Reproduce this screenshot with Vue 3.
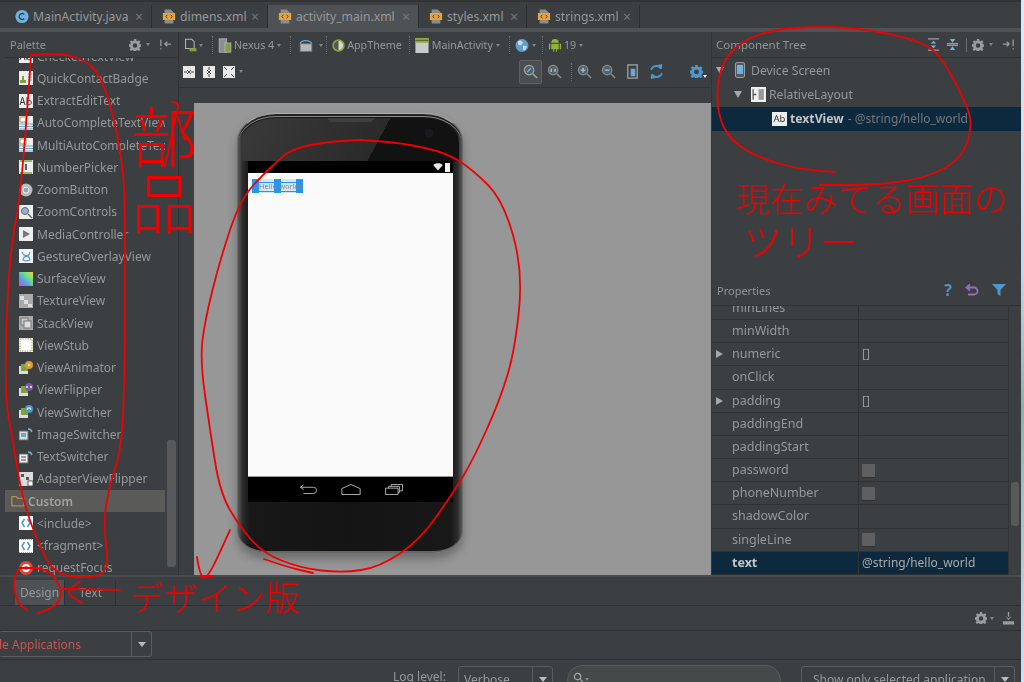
<template>
  <div class="screen">
    <div class="ide">
      <div class="tabs">
        <div v-for="tab in tabs" :key="tab.name" class="tab" :class="{ active: tab.active }" :style="{ width: tab.width + 'px' }">
          <svg v-if="tab.java" class="tab-icon" viewBox="0 0 16 16">
            <circle cx="8" cy="8" r="7.500" fill="#6db3e0" />
            <path d="M10.600 5.600a3.400 3.400 0 1 0 0 4.800" fill="none" stroke="#2b4a5e" stroke-width="1.600" />
          </svg>
          <svg v-else class="tab-icon" viewBox="0 0 16 16">
            <path d="M3 0h7l3 3v13H3z" fill="#8a8c8e" />
            <rect x="1" y="4" width="14" height="8" fill="#e9a23b" />
            <path d="M6 6 4.500 8 6 10M10 6l1.500 2L10 10" fill="none" stroke="#4a3a1c" stroke-width="1.100" />
          </svg>
          <span class="tab-name">{{ tab.name }}</span>
          <span class="tab-close">×</span>
        </div>
      </div>
      <div class="tab-strip"></div>

      <div class="main">
        <div class="palette">
          <div class="panel-head">
            <span>Palette</span>
            <span class="head-icons">
              <svg class="gear" viewBox="0 0 16 16"><path :d="gearPath" fill="#9a9c9e" /></svg>
              <i class="mini-arrow"></i>
              <svg class="pin" viewBox="0 0 14 14"><path d="M2 2v7M2 11v1.500M6 6.500h7M6 6.500l3-2.500M6 6.500 9 9" fill="none" stroke="#9a9c9e" stroke-width="1.400" /></svg>
            </span>
          </div>
          <div class="palette-body">
            <div class="palette-list">
              <div v-for="item in palette" :key="item.name" class="pal-row" :class="{ folder: item.folder }">
                <svg v-if="item.folder" class="pal-icon folder-icon" viewBox="0 0 16 14">
                  <path d="M1 12.500V2h5l1.500 2H15v8.500z" fill="none" stroke="#b08d57" stroke-width="1.500" />
                </svg>
                <svg v-else class="pal-icon" viewBox="0 0 14 14" v-html="icons[item.icon]"></svg>
                <span>{{ item.name }}</span>
              </div>
            </div>
            <div class="pal-scroll"><div class="pal-thumb"></div></div>
          </div>
        </div>

        <div class="center">
          <div class="bar-one">
            <svg class="tb-icon device-icon" viewBox="0 0 18 18">
              <path d="M2 1h8l3 3v9H2z" fill="none" stroke="#b5b7b9" stroke-width="1.300" />
              <path d="M7 12.500h9v4H7z" fill="#7fa13c" />
            </svg>
            <i class="mini-arrow"></i>
            <span class="dots"></span>
            <svg class="tb-icon" viewBox="0 0 16 18">
              <rect x="1" y="1" width="9" height="16" fill="#8d8f8f" stroke="#b5b7b9" />
              <rect x="8" y="6" width="7" height="11" fill="#7fa13c" stroke="#b5b7b9" />
            </svg>
            <span class="tb-text">Nexus 4</span>
            <i class="mini-arrow"></i>
            <span class="dots"></span>
            <svg class="tb-icon rotate-icon" viewBox="0 0 20 18">
              <path d="M3 7c1-5 12-5 14 0" fill="none" stroke="#6aa7d3" stroke-width="1.500" />
              <rect x="3" y="7" width="14" height="9" fill="#b5b7b9" stroke="#77797b" />
            </svg>
            <i class="mini-arrow"></i>
            <span class="dots tight"></span>
            <svg class="tb-icon theme-icon" viewBox="0 0 14 14">
              <circle cx="7" cy="7" r="5.800" fill="#d8d8d0" stroke="#8ba63e" stroke-width="1.800" />
              <path d="M7 2a5 5 0 0 0 0 10z" fill="#55584f" />
            </svg>
            <span class="tb-text theme">AppTheme</span>
            <span class="dots"></span>
            <svg class="tb-icon" viewBox="0 0 14 16">
              <rect y="0" width="14" height="16" fill="#c9cbcb" />
              <rect y="0" width="14" height="5" fill="#8fa63f" />
              <path d="M0 2.500h14" stroke="#566227" />
            </svg>
            <span class="tb-text activity">MainActivity</span>
            <i class="mini-arrow"></i>
            <span class="dots"></span>
            <svg class="tb-icon" viewBox="0 0 14 14">
              <circle cx="7" cy="7" r="6.500" fill="#5f9fd0" />
              <path d="M3 2.500 6 2l2 2-2 3-3-1zM8 7l4 1-2 4-2-1z" fill="#cfd8de" />
            </svg>
            <i class="mini-arrow"></i>
            <span class="dots near"></span>
            <svg class="tb-icon" viewBox="0 0 14 16">
              <path d="M3 5a4 4 0 0 1 8 0zM3 6h8v6H9v3H8v-3H6v3H5v-3H3zM0.500 6h1.500v6H.5zM12 6h1.500v6H12z" fill="#8fb339" />
            </svg>
            <span class="tb-text api">19</span>
            <i class="mini-arrow"></i>
          </div>
          <div class="bar-two">
            <div class="bar-group">
              <span class="align-btn"><svg viewBox="0 0 12 12"><path d="M1 6h3M8 6h3M4 4l2 2-2 2M8 4 6 6l2 2" fill="none" stroke="#444" /></svg></span>
              <span class="align-btn"><svg viewBox="0 0 12 12"><path d="M6 1v3M6 8v3M4 4l2 2 2-2M4 8l2-2 2 2" fill="none" stroke="#444" /></svg></span>
              <span class="align-btn"><svg viewBox="0 0 12 12"><path d="M1 1l3 3M11 1 8 4M1 11l3-3M11 11 8 8" fill="none" stroke="#444" /></svg></span>
              <i class="mini-arrow"></i>
            </div>
            <div class="bar-group">
              <span class="zoom-btn on">
                <svg viewBox="0 0 16 16"><circle cx="6.500" cy="6.500" r="5" fill="#566068" stroke="#a5a7a9" stroke-width="1.300" /><path d="M4.500 8.500l4-4" stroke="#6db3e0" stroke-width="1.600" /><path d="M10.500 10.500 15 15" stroke="#a5a7a9" stroke-width="1.600" /></svg>
              </span>
              <span class="zoom-btn">
                <svg viewBox="0 0 16 16"><circle cx="6.500" cy="6.500" r="5" fill="#566068" stroke="#8a8c8e" stroke-width="1.300" /><path d="M4.500 5v3.500M8.500 5v3.500" stroke="#c5d8e6" stroke-width="1.200" /><path d="M10.500 10.500 15 15" stroke="#8a8c8e" stroke-width="1.600" /></svg>
              </span>
              <span class="dots wide"></span>
              <span class="zoom-btn">
                <svg viewBox="0 0 16 16"><circle cx="6.500" cy="6.500" r="5" fill="#566068" stroke="#8a8c8e" stroke-width="1.300" /><path d="M4 6.500h5M6.500 4v5" stroke="#8cc3e8" stroke-width="1.500" /><path d="M10.500 10.500 15 15" stroke="#8a8c8e" stroke-width="1.600" /></svg>
              </span>
              <span class="zoom-btn">
                <svg viewBox="0 0 16 16"><circle cx="6.500" cy="6.500" r="5" fill="#566068" stroke="#8a8c8e" stroke-width="1.300" /><path d="M4 6.500h5" stroke="#8cc3e8" stroke-width="1.500" /><path d="M10.500 10.500 15 15" stroke="#8a8c8e" stroke-width="1.600" /></svg>
              </span>
              <span class="zoom-btn">
                <svg viewBox="0 0 16 16"><path d="M3 1h10v14H3z" fill="none" stroke="#a5a7a9" stroke-width="1.300" /><rect x="6" y="5" width="5" height="8" fill="#6aa7d3" /></svg>
              </span>
              <span class="zoom-btn">
                <svg viewBox="0 0 16 16"><path d="M13 5A6 6 0 0 0 3.500 4L2 6M3 11a6 6 0 0 0 9.500 1L14 10" fill="none" stroke="#4e96cc" stroke-width="2" /><path d="M9 1l5-1v5zM7 15l-5 1v-5z" fill="#4e96cc" /></svg>
              </span>
              <span class="gear-blue">
                <svg viewBox="0 0 16 16"><path :d="gearPath" fill="#4e96cc" /></svg>
                <i class="mini-arrow white"></i>
              </span>
            </div>
          </div>
          <div class="canvas">
            <div class="phone">
              <div class="bezel-top">
                <i class="speaker"></i>
                <i class="camera"></i>
              </div>
              <div class="screen-wrap">
                <div class="status-bar">
                  <svg class="wifi" viewBox="0 0 12 10"><path d="M0 2.500C3-.5 9-.5 12 2.500L6 9.500z" fill="#e8e8e8" /></svg>
                  <i class="battery"></i>
                </div>
                <div class="display">
                  <div class="selection">
                    <i></i><i></i><i></i>
                    <span class="hello">Hello world!</span>
                  </div>
                </div>
                <div class="nav-bar">
                  <svg viewBox="0 0 20 12" class="nav-back"><path d="M5 1 1.500 3.500 5 6M1.500 3.500H16a3.500 3.500 0 0 1 0 7H5" fill="none" stroke="#bbb" stroke-width="1" /></svg>
                  <svg viewBox="0 0 21 12" class="nav-home"><path d="M.5 5 10.500.5 20.500 5v6.500H.5z" fill="none" stroke="#bbb" stroke-width="1" /></svg>
                  <svg viewBox="0 0 20 12" class="nav-recent"><path d="M.5 4.500h14v7H.5zM4 4.500V2.500h12v7h-1.500M7 2.500V.5h12.500v7H16" fill="none" stroke="#bbb" stroke-width="1" /></svg>
                </div>
              </div>
            </div>
          </div>
        </div>

        <div class="right">
          <div class="panel-head tree-head">
            <span>Component Tree</span>
            <span class="head-icons">
              <svg class="pin" viewBox="0 0 14 14"><path d="M1 1h12M1 13h12" stroke="#9a9c9e" stroke-width="1.400" /><path d="M7 3l3 3H4zM7 11 4 8h6z" fill="#6db3e0" /></svg>
              <svg class="pin" viewBox="0 0 14 14"><path d="M1 6h12M1 8h12" stroke="#9a9c9e" stroke-width="1.200" /><path d="M7 5 4 1h6zM7 9l3 4H4z" fill="#6db3e0" /></svg>
              <b class="head-sep"></b>
              <svg class="gear" viewBox="0 0 16 16"><path :d="gearPath" fill="#9a9c9e" /></svg>
              <i class="mini-arrow"></i>
              <svg class="pin" viewBox="0 0 14 14"><path d="M12 2v7M12 11v1.500M1 6.500h7M8 6.500 5 4M8 6.500 5 9" fill="none" stroke="#9a9c9e" stroke-width="1.400" /></svg>
            </span>
          </div>
          <div class="tree">
            <div class="tree-row lvl-0">
              <i class="caret-down"></i>
              <svg class="tree-icon" viewBox="0 0 10 16"><rect x=".5" y=".5" width="9" height="15" rx="1.500" fill="#55585a" stroke="#9a9c9e" /><rect x="2" y="3" width="6" height="9" fill="#6db3e0" /></svg>
              <span>Device Screen</span>
            </div>
            <div class="tree-row lvl-1">
              <i class="caret-down"></i>
              <svg class="tree-icon box" viewBox="0 0 14 14"><rect width="14" height="14" fill="#f0f0f0" /><path d="M2 2v10M2 7h3" stroke="#555" stroke-width="1.200" /><rect x="7" y="2" width="5" height="10" fill="#999" /></svg>
              <span>RelativeLayout</span>
            </div>
            <div class="tree-row lvl-2 picked">
              <span class="ab">Ab</span>
              <b>textView</b>
              <span class="ref">- @string/hello_world</span>
            </div>
          </div>

          <div class="panel-head props-head">
            <span>Properties</span>
            <span class="head-icons prop-icons">
              <span class="help">?</span>
              <svg class="undo" viewBox="0 0 14 14"><path d="M5 1.500 1.500 4.500 5 7.500M1.500 4.500H9a3.500 3.500 0 0 1 0 7H3" fill="none" stroke="#9b6bc0" stroke-width="1.800" /></svg>
              <svg class="filter" viewBox="0 0 14 14"><path d="M0 1h14L8.500 7v6l-3-2V7z" fill="#4e96cc" /></svg>
            </span>
          </div>
          <div class="props">
            <div class="prop-table">
              <div v-for="prop in props" :key="prop.name" class="prop-row" :class="{ picked: prop.picked }">
                <div class="prop-name">
                  <i v-if="prop.more" class="caret-right"></i>
                  {{ prop.name }}
                </div>
                <div class="prop-value">
                  <i v-if="prop.check" class="check"></i>
                  <template v-else>{{ prop.value }}</template>
                </div>
              </div>
            </div>
            <div class="prop-scroll"><div class="prop-thumb"></div></div>
          </div>
        </div>
      </div>

      <div class="mode-bar">
        <span class="mode on">Design</span>
        <span class="mode">Text</span>
      </div>
      <div class="tool-row">
        <svg class="gear" viewBox="0 0 16 16"><path :d="gearPath" fill="#9a9c9e" /></svg>
        <i class="mini-arrow"></i>
        <svg class="pin dl" viewBox="0 0 14 14"><path d="M7 0v5M7 7v1" stroke="#9a9c9e" stroke-width="1.400" /><path d="M4.500 5 7 8l2.500-3" fill="none" stroke="#9a9c9e" /><rect x="1" y="10" width="12" height="3.500" fill="#9a9c9e" /></svg>
      </div>
      <div class="app-row">
        <div class="combo app-combo">
          <span class="app-text">le Applications</span>
          <span class="combo-arrow"><i class="caret-white"></i></span>
        </div>
      </div>
      <div class="log-row">
        <span class="log-label">Log level:</span>
        <div class="combo verbose">
          <span class="combo-text">Verbose</span>
          <span class="combo-arrow"><i class="caret-white"></i></span>
        </div>
        <div class="search">
          <svg viewBox="0 0 12 12"><circle cx="5" cy="5" r="3.500" fill="none" stroke="#aaa" stroke-width="1.300" /><path d="M8 8l3 3" stroke="#aaa" stroke-width="1.300" /></svg>
          <i class="mini-arrow"></i>
        </div>
        <div class="combo only">
          <span class="combo-text">Show only selected application</span>
          <span class="combo-arrow"><i class="caret-white"></i></span>
        </div>
      </div>
    </div>
    <div class="desktop"></div>

    <!-- red pen notes scribbled over the screenshot -->
    <svg class="pen" viewBox="0 0 1024 682">
      <path v-for="(d, i) in strokes" :key="i" :d="d" />
    </svg>
    <span class="note note-parts">部<br />品</span>
    <span class="note note-now">現在みてる画面の</span>
    <span class="note note-tree">ツリー</span>
    <span class="note note-design">デザイン版</span>
  </div>
</template>

<script setup>
const gearPath =
  "M6.500 0h3l.4 2.300 1.500.6L13.300 1.500l2 2-1.400 1.900.6 1.500 2.300.4v3l-2.300.4-.6 1.500 1.400 1.900-2 2-1.900-1.400-1.500.6-.4 2.200h-3l-.4-2.200-1.500-.6-1.900 1.400-2-2 1.400-1.900-.6-1.500L-.5 10V7l2.300-.4.6-1.500L1 3.500l2-2 1.900 1.400 1.500-.6zM8 5.500a3 3 0 1 0 0 6 3 3 0 0 0 0-6z";

const tabs = [
  { name: "MainActivity.java", width: 147, java: true },
  { name: "dimens.xml", width: 116 },
  { name: "activity_main.xml", width: 151, active: true },
  { name: "styles.xml", width: 108 },
  { name: "strings.xml", width: 113 },
];

const white = '<rect width="14" height="14" fill="#eee"/>';
const icons = {
  text: white + '<path d="M1 11 3.500 3 6 11M2 8.500h3M8 3v8M8 8a2.200 2.200 0 1 1 0 1" fill="none" stroke="#333"/>',
  badge: white + '<path d="M3 9V5h2v4zM1 12V9h6v3z" fill="#7fa13c"/><path d="M9 3h4M9 6h4M9 9h4" stroke="#888"/>',
  auto: white + '<rect x="1" y="1" width="6" height="5" fill="#fff" stroke="#b08d57"/><path d="M0 8h14M0 10.500h14M0 13h14" stroke="#6aa7d3"/>',
  picker: white + '<path d="M1 1h12M1 13h12" stroke="#7fa13c" stroke-width="1.500"/><path d="M7 4v6" stroke="#333" stroke-width="1.500"/>',
  zoombtn: '<circle cx="7" cy="7" r="6.500" fill="#bbb"/><circle cx="7" cy="7" r="3" fill="#8fa8ba" stroke="#eee"/>',
  zoomctl: white + '<circle cx="6" cy="6" r="3.500" fill="#8fb8d8" stroke="#666"/><path d="M9 9l4 4" stroke="#666" stroke-width="1.500"/>',
  media: white + '<path d="M4 3l7 4-7 4z" fill="#777"/>',
  gesture: '<rect width="14" height="14" fill="#f4f4f4"/><path d="M3 3c2 5 7 5 8 0M4 11c1-5 6-5 7 0-2 1-5 1-7 0z" fill="none" stroke="#5f9fd0" stroke-width="1.300"/>',
  surface: '<defs><linearGradient id="sv" x1="0" y1="1" x2="1" y2="0"><stop offset="0" stop-color="#d64fd0"/><stop offset=".35" stop-color="#5aa0f0"/><stop offset=".65" stop-color="#6fe080"/><stop offset="1" stop-color="#f4d050"/></linearGradient></defs><rect width="14" height="14" fill="url(#sv)"/>',
  texture: '<rect width="14" height="14" fill="#aaa"/><path d="M1 2h4v4H1zM5 6h4v4H5zM9 10h4v3H9z" fill="#ddd"/>',
  stack: '<rect width="14" height="14" fill="#aaa"/><rect x="2" y="2" width="7" height="7" fill="#c8c8c8" stroke="#777"/><rect x="5" y="5" width="7" height="7" fill="#ddd" stroke="#777"/>',
  stub: '<rect width="14" height="14" fill="#fff"/><rect x="1" y="1" width="12" height="12" fill="none" stroke="#8fa63f" stroke-dasharray="1.500 1"/>',
  anim: '<rect x="0" y="5" width="9" height="8" fill="#ddd"/><rect x="2" y="3" width="7" height="7" fill="#7fa13c"/><circle cx="10" cy="4" r="4" fill="#e8982f"/><path d="M9 2.500 11.500 4 9 5.500z" fill="#fff"/>',
  flip: '<rect x="0" y="5" width="9" height="8" fill="#ddd"/><rect x="2" y="3" width="7" height="7" fill="#7fa13c"/><circle cx="10" cy="4" r="4" fill="#7b55a8"/><path d="M8 3v2M12 3v2" stroke="#fff" stroke-width="1.400"/>',
  swtch: '<rect x="0" y="5" width="9" height="8" fill="#ddd"/><rect x="2" y="3" width="7" height="7" fill="#7fa13c"/><circle cx="10" cy="4" r="4" fill="#4e96cc"/><path d="M8.500 5V3h3v2" fill="none" stroke="#fff"/>',
  imgsw: '<rect x="0" y="4" width="9" height="9" fill="#ddd" stroke="#666"/><rect x="2" y="6" width="5" height="4" fill="#6aa7d3"/><path d="M9 2a4 4 0 0 1 4 3" fill="none" stroke="#6db3e0" stroke-width="1.300"/>',
  txtsw: '<rect x="0" y="4" width="9" height="9" fill="#eee" stroke="#666"/><path d="M2 7h5M2 10h5" stroke="#444"/><path d="M9 2a4 4 0 0 1 4 3" fill="none" stroke="#6db3e0" stroke-width="1.300"/>',
  adapter: '<rect width="14" height="14" fill="#ddd"/><path d="M2 2h3v3H2zM7 5h3v3H7z" fill="#555"/><rect x="9" y="9" width="5" height="5" fill="#fff" stroke="#555"/>',
  include: '<rect width="14" height="14" fill="#fff"/><path d="M5.500 3 3 7l2.500 4M8.500 3 11 7l-2.500 4" fill="none" stroke="#4e96cc" stroke-width="1.500"/>',
  fragment: '<rect width="14" height="14" fill="#fff"/><path d="M0 0h14M0 14h14" stroke="#3c3f41" stroke-dasharray="1 1"/><path d="M5.500 3 3 7l2.500 4M8.500 3 11 7l-2.500 4" fill="none" stroke="#4e96cc" stroke-width="1.500"/>',
  focus: '<circle cx="7" cy="7" r="7" fill="#d9483b"/><circle cx="7" cy="7" r="4" fill="#fff"/><circle cx="7" cy="7" r="2" fill="#d9483b"/>',
};

const palette = [
  { name: "CheckedTextView", icon: "text" },
  { name: "QuickContactBadge", icon: "badge" },
  { name: "ExtractEditText", icon: "text" },
  { name: "AutoCompleteTextView", icon: "auto" },
  { name: "MultiAutoCompleteTextView", icon: "auto" },
  { name: "NumberPicker", icon: "picker" },
  { name: "ZoomButton", icon: "zoombtn" },
  { name: "ZoomControls", icon: "zoomctl" },
  { name: "MediaController", icon: "media" },
  { name: "GestureOverlayView", icon: "gesture" },
  { name: "SurfaceView", icon: "surface" },
  { name: "TextureView", icon: "texture" },
  { name: "StackView", icon: "stack" },
  { name: "ViewStub", icon: "stub" },
  { name: "ViewAnimator", icon: "anim" },
  { name: "ViewFlipper", icon: "flip" },
  { name: "ViewSwitcher", icon: "swtch" },
  { name: "ImageSwitcher", icon: "imgsw" },
  { name: "TextSwitcher", icon: "txtsw" },
  { name: "AdapterViewFlipper", icon: "adapter" },
  { name: "Custom", folder: true },
  { name: "<include>", icon: "include" },
  { name: "<fragment>", icon: "fragment" },
  { name: "requestFocus", icon: "focus" },
];

const props = [
  { name: "minLines" },
  { name: "minWidth" },
  { name: "numeric", value: "[]", more: true },
  { name: "onClick" },
  { name: "padding", value: "[]", more: true },
  { name: "paddingEnd" },
  { name: "paddingStart" },
  { name: "password", check: true },
  { name: "phoneNumber", check: true },
  { name: "shadowColor" },
  { name: "singleLine", check: true },
  { name: "text", value: "@string/hello_world", picked: true },
];

// freehand line through the points, rounded with quadratic segments
function pen(points) {
  let d = `M${points[0][0]} ${points[0][1]}`;
  for (let i = 1; i < points.length - 1; i++) {
    const mx = (points[i][0] + points[i + 1][0]) / 2;
    const my = (points[i][1] + points[i + 1][1]) / 2;
    d += ` Q${points[i][0]} ${points[i][1]} ${mx} ${my}`;
  }
  const last = points[points.length - 1];
  return `${d} L${last[0]} ${last[1]}`;
}

const strokes = [
  // palette loop
  [[31, 55], [60, 53], [85, 60], [100, 75], [112, 110], [122, 160], [125, 200], [125, 280], [125, 360], [122, 447], [110, 483], [103, 523], [110, 573], [85, 578], [60, 575], [45, 560], [22, 500], [13, 440], [5, 400], [7, 300], [12, 240], [20, 200], [28, 100], [31, 55]],
  // phone loop
  [[360, 140], [300, 142], [267, 170], [240, 200], [220, 260], [205, 320], [200, 360], [210, 430], [220, 493], [240, 527], [263, 553], [300, 568], [343, 573], [380, 567], [420, 540], [453, 493], [473, 460], [500, 400], [515, 350], [523, 270], [503, 200], [473, 170], [447, 153], [403, 143], [360, 140]],
  [[264, 559], [287, 567], [313, 573]],
  // tree loop
  [[835, 172], [800, 170], [757, 157], [730, 140], [717, 113], [718, 73], [733, 47], [767, 30], [823, 26], [873, 30], [927, 43], [945, 63], [963, 97], [973, 123], [963, 157], [930, 177], [880, 185], [820, 185]],
  // design tab loop and arrow
  [[20, 568], [12, 577], [17, 603], [27, 610]],
  [[38, 613], [55, 608], [63, 593], [55, 577], [43, 568], [20, 568]],
  [[120, 590], [63, 589]],
  [[80, 582], [63, 591], [82, 603]],
  [[197, 557], [200, 577], [208, 578], [230, 530]],
  [[200, 577], [213, 576]],
  // arrow above the parts note
  [[172, 102], [180, 102], [175, 118], [165, 167]],
  [[177, 115], [185, 140]],
].map(pen);
</script>

<style scoped>
.screen {
  position: relative;
  display: flex;
  width: 1024px;
  height: 682px;
  overflow: hidden;
  font-family: "Noto Sans", sans-serif;
  font-size: 12px;
  color: #96989a;
  background: #3c3f41;
}

.ide {
  flex: 1;
  min-width: 0;
  display: flex;
  flex-direction: column;
  filter: blur(0.35px);
}

.desktop {
  width: 3px;
  background: linear-gradient(#dfe8ef, #c4d6e4 40%, #8fb0a8 60%, #cfe0ee);
}

i {
  display: block;
}

/* file tabs */
.tabs {
  height: 28px;
  flex: none;
  display: flex;
  box-sizing: border-box;
  padding: 3px 0 0 5px;
  border-top: 2px solid #313335;
  background: #3c3f41;
}

.tab {
  display: flex;
  align-items: center;
  box-sizing: border-box;
  padding-left: 10px;
  border-right: 1px solid #2b2d2f;
  font-size: 12.2px;
}

.tab.active {
  background: #4e5254;
}

.tab-icon {
  width: 14px;
  height: 15px;
  flex: none;
  margin-right: 4px;
}

.tab-name {
  flex: 1;
  white-space: nowrap;
}

.tab-close {
  margin-right: 8px;
  color: #75777a;
  font-size: 14px;
}

.tab-strip {
  height: 4px;
  flex: none;
  background: #4e5254;
}

/* three panels */
.main {
  height: 543px;
  flex: none;
  display: flex;
  padding-left: 5px;
}

.panel-head {
  height: 26px;
  flex: none;
  display: flex;
  align-items: center;
  justify-content: space-between;
  box-sizing: border-box;
  padding: 0 6px 0 5px;
  font-size: 11px;
  color: #929496;
  border-bottom: 1px solid #323436;
}

.head-icons {
  display: flex;
  align-items: center;
  gap: 2px;
}

.gear {
  width: 12px;
  height: 12px;
}

.pin {
  width: 13px;
  height: 13px;
  margin-left: 4px;
}

.mini-arrow {
  width: 0;
  height: 0;
  border: 2.500px solid transparent;
  border-top: 3px solid #85878a;
  border-bottom: 0;
  margin: 0 3px;
}

.mini-arrow.white {
  border-top-color: #eee;
}

.palette {
  width: 174px;
  flex: none;
  display: flex;
  flex-direction: column;
  border-right: 1px solid #323436;
  box-sizing: border-box;
}

.palette-body {
  flex: 1;
  min-height: 0;
  display: flex;
}

.palette-list {
  width: 160px;
  flex: none;
  overflow: hidden;
}

.pal-row {
  height: 22.260px;
  display: flex;
  align-items: center;
  padding-left: 14px;
  white-space: nowrap;
}

.pal-row:first-child {
  margin-top: -13px;
}

.pal-row.folder {
  padding-left: 6px;
  background: #5a5a58;
  font-weight: 600;
  color: #a0a29f;
}

.pal-icon {
  width: 14px;
  height: 14px;
  flex: none;
  margin-right: 4px;
}

.folder-icon {
  width: 14px;
  margin-right: 3px;
}

.pal-scroll {
  flex: 1;
  display: flex;
  flex-direction: column;
  justify-content: flex-end;
  padding: 0 2px 8px 2px;
}

.pal-thumb {
  height: 127px;
  border-radius: 3px;
  background: #57595b;
}

.center {
  width: 532px;
  flex: none;
  display: flex;
  flex-direction: column;
}

.bar-one {
  height: 26px;
  flex: none;
  display: flex;
  align-items: center;
  padding-left: 5px;
  font-size: 10.700px;
}

.tb-icon {
  width: 14px;
  height: 15px;
  flex: none;
}

.device-icon {
  margin-right: -2px;
}

.rotate-icon {
  width: 20px;
}

.theme-icon {
  width: 13px;
}

.dots {
  width: 0;
  height: 18px;
  margin: 0 5px 0 6px;
  border-left: 1px dotted #6a6c6e;
}

.dots.tight {
  margin-left: 0;
}

.dots.near {
  margin-left: 3px;
}

.tb-text {
  margin-left: 2px;
  white-space: nowrap;
}

.theme {
  margin-right: 1px;
}

.activity {
  margin-left: 3px;
}

.bar-two {
  height: 30px;
  flex: none;
  display: flex;
  align-items: center;
  justify-content: space-between;
  box-sizing: border-box;
  padding: 0 3px 2px 4px;
  border-bottom: 1px solid #323436;
}

.bar-group {
  display: flex;
  align-items: center;
}

.align-btn {
  width: 12px;
  height: 12px;
  margin-right: 8px;
  background: #e8e8e8;
}

.align-btn + .mini-arrow {
  margin-left: -4px;
}

.align-btn svg {
  display: block;
}

.zoom-btn {
  width: 24px;
  height: 24px;
  display: flex;
  align-items: center;
  justify-content: center;
  box-sizing: border-box;
}

.zoom-btn.on {
  width: 23px;
  background: #4b4f52;
  border: 1px solid #5e6265;
  border-radius: 2px;
}

.zoom-btn svg {
  width: 15px;
  height: 15px;
}

.dots.wide {
  margin: 0 0 0 5px;
}

.gear-blue {
  width: 18px;
  margin-left: 22px;
  display: flex;
}

.gear-blue svg {
  width: 13px;
  height: 13px;
}

.gear-blue .mini-arrow {
  margin: 10px 0 0 0;
}

.canvas {
  flex: 1;
  min-height: 0;
  margin: 15px 0 0 15px;
  padding: 10px 0 0 43px;
  box-sizing: border-box;
  background: #979797;
}

.phone {
  width: 226px;
  height: 440px;
  box-sizing: border-box;
  display: flex;
  flex-direction: column;
  overflow: hidden;
  border-radius: 40px 40px 30px 30px / 28px 28px 22px 22px;
  border: 1px solid #6a6a6a;
  border-top-color: #b0b0b0;
  border-bottom: 2px solid #666;
  background: linear-gradient(90deg, #5a5a5a, #2c2c2c 2%, #181818 5%, #141414 50%, #181818 95%, #2c2c2c 98%, #5a5a5a);
  box-shadow: inset 0 2px 0 #222, inset 0 3px 0 #8a8a8a, 0 6px 8px rgba(60, 60, 60, 0.45);
}

.bezel-top {
  position: relative;
  height: 43px;
  flex: none;
  margin: 4px 3px 0;
  border-radius: 36px 36px 0 0 / 24px 24px 0 0;
  background: linear-gradient(118deg, #3a3a3a, #2a2a2a 62%, #121212 62%);
}

.speaker {
  position: absolute;
  left: 86px;
  top: 0;
  width: 48px;
  height: 4px;
  background: #3f3f3f;
  clip-path: polygon(0 0, 100% 0, 92% 100%, 8% 100%);
}

.camera {
  position: absolute;
  right: 26px;
  top: 11px;
  width: 8px;
  height: 8px;
  border-radius: 50%;
  background: #1a1a22;
}

.screen-wrap {
  width: 205px;
  flex: none;
  margin-left: 10px;
}

.status-bar {
  height: 12px;
  display: flex;
  align-items: center;
  justify-content: flex-end;
  gap: 2px;
  padding-right: 3px;
  background: #000;
}

.wifi {
  width: 10px;
  height: 8px;
}

.battery {
  width: 5px;
  height: 9px;
  background: #f2f2f2;
}

.display {
  height: 304px;
  box-sizing: border-box;
  padding: 6px 0 0 4px;
  background: #fafafa;
  border-bottom: 1px solid #999;
}

.selection {
  position: relative;
  width: 51px;
  height: 14px;
  display: flex;
  justify-content: space-between;
  background: linear-gradient(#2196f3, #2196f3) 0 3px / 100% 1px no-repeat, linear-gradient(#2196f3, #2196f3) 0 12px / 100% 1px no-repeat, #cfe6fb;
}

.selection i {
  width: 7px;
  background: #2196f3;
}

.hello {
  position: absolute;
  left: 7px;
  top: 2px;
  font-size: 7.500px;
  line-height: 11px;
  color: #888;
  white-space: nowrap;
}

.nav-bar {
  height: 25px;
  display: flex;
  align-items: center;
  padding-left: 51px;
  background: #000;
}

.nav-back {
  width: 18px;
  height: 11px;
}

.nav-home {
  width: 20px;
  height: 11px;
  margin-left: 24px;
}

.nav-recent {
  width: 18px;
  height: 11px;
  margin-left: 24px;
}

/* right column */
.right {
  flex: 1;
  min-width: 0;
  display: flex;
  flex-direction: column;
  border-left: 1px solid #323436;
}

.tree-head {
  padding-left: 4px;
  padding-right: 6px;
  font-size: 11.500px;
}

.head-sep {
  width: 1px;
  height: 14px;
  margin: 0 3px 0 5px;
  background: #6a6c6e;
}

.tree {
  height: 220px;
  flex: none;
}

.tree-row {
  height: 24.400px;
  display: flex;
  align-items: center;
  white-space: nowrap;
  font-size: 12.200px;
}

.lvl-0 {
  padding-left: 4px;
}

.lvl-1 {
  padding-left: 22px;
}

.lvl-2 {
  padding-left: 60px;
}

.caret-down {
  width: 0;
  height: 0;
  border: 4.500px solid transparent;
  border-top: 7px solid #a5a7a9;
  border-bottom: 0;
  margin-right: 9px;
}

.tree-icon {
  width: 10px;
  height: 16px;
  margin-right: 6px;
  margin-left: 2px;
}

.tree-icon.box {
  width: 15px;
  height: 15px;
  margin: 0 3px 0 0;
}

.picked {
  background: #0d293e;
}

.ab {
  width: 15px;
  height: 14px;
  margin-right: 3px;
  background: #eee;
  color: #333;
  font-size: 9.500px;
  line-height: 14px;
  text-align: center;
}

.tree-row b {
  color: #c4c6c8;
  font-weight: 700;
}

.ref {
  margin-left: 4px;
  font-size: 12px;
  color: #75777a;
}

.props-head {
  height: 27px;
  padding: 0 6px 3px 5px;
  border-bottom: 0;
}

.prop-icons {
  gap: 13px;
  padding-right: 9px;
}

.help {
  color: #4e96cc;
  font-size: 16px;
  font-weight: 700;
}

.undo,
.filter {
  width: 14px;
  height: 14px;
}

.props {
  flex: 1;
  min-height: 0;
  display: flex;
  border-top: 1px solid #323436;
}

.prop-table {
  width: 296px;
  flex: none;
  overflow: hidden;
  display: flex;
  flex-direction: column;
  justify-content: flex-end;
  border-right: 1px solid #323436;
}

.prop-row {
  height: 23.200px;
  flex: none;
  display: flex;
  box-sizing: border-box;
  border-bottom: 1px solid #2f3133;
}

.prop-name {
  position: relative;
  width: 147px;
  flex: none;
  box-sizing: border-box;
  padding-left: 20px;
  line-height: 22px;
  border-right: 1px solid #2f3133;
  font-size: 12.500px;
}

.caret-right {
  position: absolute;
  left: 4px;
  top: 7px;
  width: 0;
  height: 0;
  border: 4px solid transparent;
  border-left: 7px solid #a5a7a9;
  border-right: 0;
}

.prop-value {
  padding-left: 3px;
  line-height: 22px;
  display: flex;
  align-items: center;
  font-size: 12px;
}

.prop-row.picked .prop-name {
  font-weight: 700;
  color: #c4c6c8;
}

.prop-row.picked .prop-value {
  color: #a8aaac;
}

.check {
  width: 13px;
  height: 13px;
  border-radius: 1px;
  background: #5f5f5f;
  box-shadow: 0 1px 0 #2f3133;
}

.prop-scroll {
  flex: 1;
  display: flex;
  flex-direction: column;
  justify-content: flex-end;
  padding: 0 2px 49px 2px;
}

.prop-thumb {
  height: 44px;
  border-radius: 3px;
  background: #57595b;
}

/* bottom */
.mode-bar {
  height: 31px;
  flex: none;
  display: flex;
  align-items: flex-end;
  box-sizing: border-box;
  padding-left: 15px;
  gap: 1px;
  border-top: 2px solid #4a4d4f;
  border-bottom: 1px solid #2f3133;
}

.mode {
  width: 49px;
  height: 25px;
  text-align: center;
  line-height: 25px;
  border-right: 1px solid #2f3133;
}

.mode.on {
  background: #4e5254;
}

.tool-row {
  height: 25px;
  flex: none;
  display: flex;
  align-items: center;
  justify-content: flex-end;
  padding-right: 6px;
  box-sizing: border-box;
  border-bottom: 1px solid #2f3133;
}

.dl {
  margin-left: 5px;
}

.app-row {
  height: 29px;
  flex: none;
  box-sizing: border-box;
  border-bottom: 1px solid #2f3133;
}

.combo {
  display: flex;
  align-items: center;
  box-sizing: border-box;
  border: 1px solid #5a5c5e;
  border-radius: 3px;
}

.app-combo {
  width: 153px;
  height: 26px;
  margin-left: -1px;
  justify-content: space-between;
  border-left: 0;
}

.app-text {
  color: #c75450;
}

.combo-arrow {
  width: 19px;
  height: 100%;
  flex: none;
  display: flex;
  align-items: center;
  justify-content: center;
  border-left: 1px solid #5a5c5e;
}

.caret-white {
  width: 0;
  height: 0;
  border: 4px solid transparent;
  border-top: 5px solid #bbb;
  border-bottom: 0;
}

.log-row {
  flex: 1;
  min-height: 0;
  display: flex;
  align-items: flex-start;
  padding: 6px 0 0 393px;
  overflow: hidden;
}

.log-label {
  width: 65px;
  flex: none;
  line-height: 22px;
}

.log-row .combo {
  height: 26px;
  justify-content: space-between;
}

.verbose {
  width: 95px;
  flex: none;
}

.combo-text {
  padding-left: 5px;
  white-space: nowrap;
}

.search {
  width: 214px;
  height: 30px;
  flex: none;
  margin: -1px 20px 0 14px;
  display: flex;
  align-items: flex-start;
  box-sizing: border-box;
  padding: 6px 0 0 5px;
  border: 1px solid #5a5c5e;
  border-radius: 15px;
  background: #45494a;
}

.search svg {
  width: 11px;
  height: 11px;
}

.search .mini-arrow {
  margin: 6px 0 0 1px;
}

.only {
  width: 214px;
  flex: none;
}

.only .combo-text {
  padding-left: 11px;
}

/* pen annotations */
.pen {
  position: absolute;
  inset: 0;
  width: 1024px;
  height: 682px;
  fill: none;
  stroke: #f00000;
  stroke-width: 1.800;
  stroke-linecap: round;
  stroke-linejoin: round;
  pointer-events: none;
}

.note {
  position: absolute;
  color: #f00000;
  font-family: "Noto Sans CJK JP", sans-serif;
  font-weight: 300;
  white-space: nowrap;
  line-height: 1;
}

.note-parts {
  left: 131px;
  top: 100px;
  font-size: 66px;
}

.note-now {
  left: 736px;
  top: 181px;
  font-size: 34px;
}

.note-tree {
  left: 744px;
  top: 221px;
  font-size: 38px;
}

.note-design {
  left: 130px;
  top: 580px;
  font-size: 34px;
}
</style>
